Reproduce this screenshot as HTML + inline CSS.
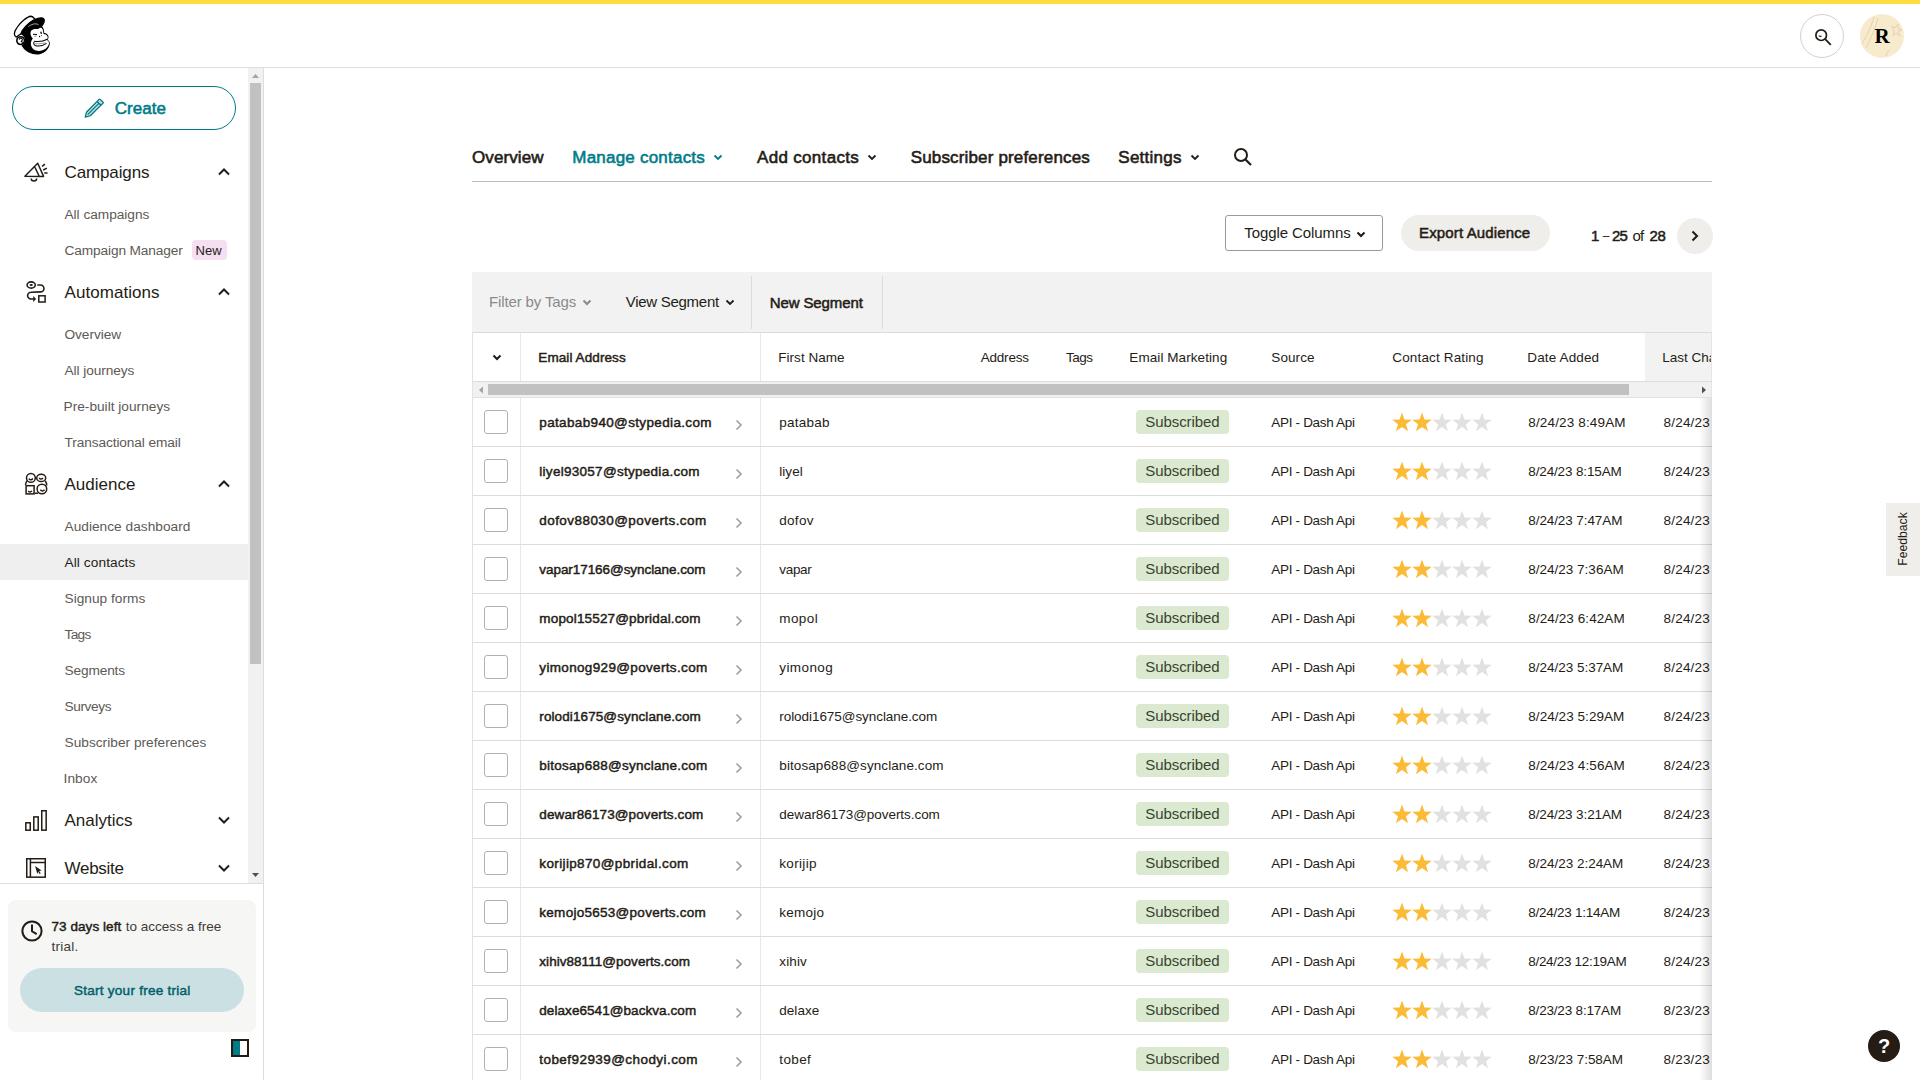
<!DOCTYPE html>
<html lang="en"><head><meta charset="utf-8"><title>Audience | Mailchimp</title>
<style>
*{box-sizing:border-box;margin:0;padding:0}
html,body{width:1920px;height:1080px;overflow:hidden;background:#fff}
body{font-family:"Liberation Sans",sans-serif;color:#241c15;position:relative}
.abs{position:absolute}
span,div,svg{position:absolute;white-space:nowrap}
#topbar{left:0;top:0;width:1920px;height:4px;background:#ffdd3f}
#hdr{left:0;top:4px;width:1920px;height:64px;border-bottom:1px solid #dfdedc;background:#fff}
#side{left:0;top:68px;width:264px;height:1012px;border-right:1px solid #dedddc;background:#fff}
#sscroll{left:0;top:0;width:263px;height:816px;border-bottom:1px solid #dedddc;overflow:hidden}
#sbtrack{left:248px;top:0;width:15px;height:815px;background:#f1f1f1}
#sbthumb{left:2px;top:15px;width:11px;height:581px;background:#c1c1c1}
#create{left:12px;top:18px;width:224px;height:44px;border:1px solid #007c89;border-radius:22px}
#create span{left:101px;top:12px;font-size:17px;font-weight:bold;color:#007c89;line-height:20px}
.nav{left:64px;font-size:17px;line-height:20px;color:#241c15}
.sn{left:64px;font-size:13.7px;line-height:16px;color:#5d5955}
.sn.act{color:#241c15}
#actbg{left:0;top:476px;width:248px;height:36px;background:#efefef}
.chev{left:217px;width:14px;height:9px}
.ico{left:24px;width:24px;height:24px}
#newb{left:192px;top:172px;width:35px;height:20px;border-radius:4px;background:#f7dff2;font-size:13px;line-height:20px;color:#241c15}
#newb span{top:1px;left:5px}
#trial{left:8px;top:832px;width:248px;height:132px;border-radius:8px;background:#f6f6f4}
#trial .tx{left:43px;font-size:13.5px;line-height:20px;color:#403b36}
#trial b{color:#241c15;position:static}
#tbtn{left:12px;top:68px;width:224px;height:44px;border-radius:22px;background:#cbe0e2;color:#00616b;font-weight:bold;font-size:13.5px;line-height:44px}
#tbtn span{top:1px;left:50px}
/* main */
.tab{top:146px;font-size:17px;line-height:22px;font-weight:bold;color:#241c15}
#tabline{left:472px;top:181px;width:1240px;height:1px;background:#bdbbb9}
#tog{left:1225px;top:215px;width:158px;height:36px;border:1px solid #9c9a97;border-radius:3px;background:#fff}
#tog span{left:18px;top:8px;font-size:15px;line-height:18px}
#exp{left:1401px;top:215px;width:149px;height:36px;border-radius:18px;background:#efeeea;font-size:15px;font-weight:bold;line-height:36px}
#exp span{top:0;left:19px}
.pg{left:1592px;top:226px;font-size:15px;line-height:20px}
#nx{left:1677px;top:218px;width:36px;height:36px;border-radius:18px;background:#efeeea}
#fbar{left:472px;top:272px;width:1240px;height:61px;background:#f2f2f2}
#fbar span{font-size:15px;line-height:18px;top:21px}
.vd{top:4px;width:1px;height:53px;background:#dddcda}
#thead{left:472px;top:332px;width:1240px;height:50px;overflow:hidden;background:#fff;border-left:1px solid #e3e2e0;border-right:1px solid #e6e5e4;border-top:1px solid #dcdbd9;border-bottom:1px solid #dddcda}
#thead span{top:16px;font-size:13.5px;line-height:16px;color:#241c15}
#hsb{left:472px;top:382px;width:1240px;height:16px;background:#f1f1f1;border-left:1px solid #e3e2e0;border-right:1px solid #e6e5e4;border-bottom:1px solid #e2e1e0}
#hsb .th{left:15px;top:2px;width:1141px;height:11px;background:#c1c1c1}
.row{left:472px;width:1240px;height:49px;border-left:1px solid #e3e2e0;border-bottom:1px solid #dddcda;background:#fff}
.row .t{top:16px;font-size:13.5px;line-height:16px;color:#241c15}
.cb{left:11px;top:12px;width:24px;height:24px;border:1px solid #b3b1af;border-radius:3px;background:#fff}
.em{left:66px;font-weight:bold}
.rc{left:261.500px;top:21px;width:8px;height:12px}
.fn{left:306px}
.sub{left:663px;top:12px;width:93px;height:24px;border-radius:4px;background:#dbe9d0;color:#37442e;font-size:15px;line-height:24px}
.sub span{top:0;left:10px}
.src{left:798px}
.stars{left:919px;top:14px;width:100px;height:20px}
.st{position:static;display:inline-block;width:20px;height:20px;vertical-align:top}
.da{left:1055px}
.lc{left:1190px}
.vl{width:1px;background:#e9e8e6}
#tshadow{left:1699px;top:398px;width:13px;height:682px;background:linear-gradient(to right,rgba(0,0,0,0),rgba(0,0,0,.13))}
#feedback{left:1886px;top:503px;width:34px;height:73px;background:#efeeea}
#feedback span{left:17px;top:36px;font-size:12.200px;line-height:16px;color:#241c15;transform:translate(-50%,-50%) rotate(-90deg)}
#help{left:1868px;top:1030px;width:32px;height:32px;border-radius:16px;background:#241c15;color:#fff;font-weight:bold;font-size:20px;line-height:32px;text-align:center}

.nav,.sn,.tab,.row .t,#thead span,#fbar span.sb,#trial .tx{margin-top:1px}

.sb{font-weight:normal !important;-webkit-text-stroke:0.034em currentColor}

</style></head>
<body>
<div id="topbar"></div>
<div id="hdr">
<svg id="logo" style="left:10px;top:8px;width:46px;height:46px" viewBox="0 0 1080 1080">
<path d="M150 590C90 560 80 480 160 370C250 240 400 110 490 100C530 100 560 140 585 165L560 185C430 260 290 400 250 520C210 540 180 560 150 590Z" fill="#fff" stroke="#000" stroke-width="30" stroke-linejoin="round"/>
<path d="M250 520C290 400 430 260 560 185L585 165C640 130 720 110 770 130C820 150 830 200 815 240C800 280 780 310 755 340C790 380 800 430 800 490C850 500 900 530 905 580C905 610 895 630 885 650C920 680 940 710 935 750C920 850 830 960 700 990C560 1020 380 960 300 830L270 790C330 760 360 700 350 640C340 580 300 540 250 520Z" fill="#000"/>
<circle cx="250" cy="672" r="90" fill="#fff" stroke="#000" stroke-width="38"/>
<path d="M215 650C225 612 275 602 290 642C298 670 270 680 265 695L300 715" fill="none" stroke="#000" stroke-width="26"/>
<path d="M480 500C480 440 520 405 580 400C620 400 650 405 690 380C720 360 760 375 770 420C780 450 780 490 790 515C840 520 885 550 885 590C885 615 875 635 865 650C900 680 920 700 915 740C900 830 800 915 680 915C580 915 500 860 490 760C485 720 500 670 535 625C500 590 480 540 480 500Z" fill="#fff"/>
<path d="M572 688C680 700 800 682 872 640" fill="none" stroke="#000" stroke-width="24"/>
<path d="M585 690C545 708 545 762 592 786C660 812 770 792 858 735" fill="none" stroke="#000" stroke-width="24"/>
<path d="M590 742C660 752 750 742 830 722" fill="none" stroke="#555" stroke-width="14"/>
<path d="M540 524L632 530" stroke="#000" stroke-width="24"/>
<path d="M572 574L622 556" stroke="#000" stroke-width="10"/>
<ellipse cx="730" cy="488" rx="17" ry="30" fill="#000" transform="rotate(-12 730 488)"/>
<circle cx="695" cy="575" r="15" fill="#000"/>
<ellipse cx="740" cy="555" rx="8" ry="13" fill="#000" transform="rotate(15 740 555)"/>
<path d="M430 345C500 290 590 255 672 298" fill="none" stroke="#fff" stroke-width="15"/>
</svg>
<div style="left:1800px;top:10px;width:44px;height:44px;border:1px solid #d3d1cd;border-radius:22px">
<svg style="left:13px;top:13px;width:18px;height:18px" viewBox="0 0 18 18"><circle cx="7.2" cy="7.2" r="5.3" fill="none" stroke="#241c15" stroke-width="1.7"/><path d="M11.2 11.2l5.6 5.6" stroke="#241c15" stroke-width="1.8"/><path d="M4.8 7.6c.8.7 1.8.8 2.6.5" stroke="#241c15" stroke-width="1.2" fill="none"/></svg>
</div>
<div style="left:1860px;top:10px;width:44px;height:44px;border-radius:22px;background:#f8ebcd;overflow:hidden">
<svg style="left:0;top:0;width:44px;height:44px" viewBox="0 0 44 44"><path d="M2 30C8 20 12 10 14 3M6 34C12 22 16 12 18 4M32 12l3 2 3-4 0 5 4 1-4 2 2 4-4-3-3 3 1-5zM26 42c1-3 2-5 4-6" fill="none" stroke="#d9c9a6" stroke-width=".7"/></svg>
<span style="left:0;top:8px;width:44px;text-align:center;font-family:'Liberation Serif',serif;font-weight:bold;font-size:21px;line-height:28px;color:#000">R</span>
</div>
</div>

<div id="side">
<div id="sscroll">
<div id="create">
<svg style="left:71px;top:10.700px;width:20.700px;height:20.700px" viewBox="0 0 22 22"><path d="M1.300 20.400L2.600 15.200L16 1.500Q16.500 1 17.100 1.500L20.300 4.500Q20.800 5 20.300 5.500L6.700 18.900Z" fill="#a9e4ea" stroke="#0a6e78" stroke-width="1.300" stroke-linejoin="round"/><path d="M3.900 17.600L15.500 6M13.900 3.700L18 7.700" fill="none" stroke="#0a6e78" stroke-width="1.200"/></svg>
<span class="sb" style="left:101.75px;letter-spacing:0.036px;">Create</span></div>

<svg class="ico" style="top:92px" viewBox="0 0 24 24"><path d="M0.900 16.200L13.700 3.300L19.600 16.400Z M10.900 7.200L15.100 16 M7.200 18.400c0 3.300 5.500 3.300 5.500 0 M18.100 6.300L20.900 4.100 M19.200 10L22.900 8.100 M20.300 13H23.500" fill="none" stroke="#241c15" stroke-width="1.500" stroke-linejoin="round"/></svg>
<span class="nav" style="left:64.50px;letter-spacing:-0.123px;top:94px">Campaigns</span>
<svg class="chev" style="top:99px" viewBox="0 0 14 9"><path d="M2 7.500l5-5 5 5" fill="none" stroke="#241c15" stroke-width="2"/></svg>
<span class="sn" style="left:64.50px;letter-spacing:-0.030px;top:138px">All campaigns</span>
<span class="sn" style="left:64.50px;letter-spacing:-0.127px;top:174px">Campaign Manager</span>
<div id="newb"><span style="left:3.50px;letter-spacing:0.066px;">New</span></div>

<svg class="ico" style="top:212px" viewBox="0 0 24 24"><ellipse cx="7.200" cy="5" rx="4.100" ry="3.100" fill="none" stroke="#241c15" stroke-width="1.600"/><ellipse cx="7.200" cy="5" rx="1.700" ry="0.900" fill="#241c15"/><path d="M13.300 5H16.500a3.450 3.450 0 0 1 0 6.900L7 12.300a3.350 3.350 0 0 0 0 6.700H9.500" fill="none" stroke="#241c15" stroke-width="1.600"/><path d="M9.200 16.100L12.100 19L9.200 22Z" fill="#241c15"/><rect x="14.800" y="15.800" width="6.300" height="6.200" fill="none" stroke="#241c15" stroke-width="1.500"/></svg>
<span class="nav" style="left:64.50px;letter-spacing:0.050px;top:214px">Automations</span>
<svg class="chev" style="top:219px" viewBox="0 0 14 9"><path d="M2 7.500l5-5 5 5" fill="none" stroke="#241c15" stroke-width="2"/></svg>
<span class="sn" style="left:64.50px;letter-spacing:-0.058px;top:258px">Overview</span>
<span class="sn" style="left:64.50px;letter-spacing:-0.082px;top:294px">All journeys</span>
<span class="sn" style="left:63.50px;letter-spacing:0.005px;top:330px">Pre-built journeys</span>
<span class="sn" style="left:64.50px;letter-spacing:-0.104px;top:366px">Transactional email</span>

<svg class="ico" style="top:404px" viewBox="0 0 24 24"><g fill="none" stroke="#241c15" stroke-width="1.500"><circle cx="6.900" cy="5.900" r="4.400"/><ellipse cx="17.200" cy="5.900" rx="4.500" ry="3.600"/><rect x="2.100" y="13.700" width="8" height="8.200"/><circle cx="17.900" cy="17" r="4.800"/><path d="M4.800 6.600Q6.800 9.100 8.900 6.600 M15.100 5.900Q17 8.100 18.900 5.900 M4.200 18.900Q6.100 21.100 7.900 18.900 M16.300 17.700Q18.300 20.100 20.500 17.700 M3.100 8.700Q1.600 10.500 1.500 13 M21.200 8.700Q22.600 10.500 22.700 13.500 M10.900 21.300H14"/></g></svg>
<span class="nav" style="left:64.50px;letter-spacing:0.009px;top:406px">Audience</span>
<svg class="chev" style="top:411px" viewBox="0 0 14 9"><path d="M2 7.500l5-5 5 5" fill="none" stroke="#241c15" stroke-width="2"/></svg>
<span class="sn" style="left:64.50px;letter-spacing:0.017px;top:450px">Audience dashboard</span>
<div id="actbg"></div>
<span class="sn act" style="left:64.50px;letter-spacing:0.078px;top:486px">All contacts</span>
<span class="sn" style="left:64.50px;letter-spacing:0.018px;top:522px">Signup forms</span>
<span class="sn" style="left:64.50px;letter-spacing:-0.689px;top:558px">Tags</span>
<span class="sn" style="left:64.50px;letter-spacing:-0.148px;top:594px">Segments</span>
<span class="sn" style="left:64.50px;letter-spacing:-0.392px;top:630px">Surveys</span>
<span class="sn" style="left:64.50px;letter-spacing:0.016px;top:666px">Subscriber preferences</span>
<span class="sn" style="left:63.50px;letter-spacing:0.090px;top:702px">Inbox</span>

<svg class="ico" style="top:740px" viewBox="0 0 24 24"><g fill="none" stroke="#241c15" stroke-width="1.500"><rect x="1.850" y="14.800" width="4.400" height="7.400"/><rect x="9.800" y="8.900" width="4.400" height="13.300"/><rect x="17.750" y="2.750" width="4.400" height="19.400"/></g></svg>
<span class="nav" style="left:64.50px;letter-spacing:-0.003px;top:742px">Analytics</span>
<svg class="chev" style="top:748px" viewBox="0 0 14 9"><path d="M2 1.500l5 5 5-5" fill="none" stroke="#241c15" stroke-width="2"/></svg>

<svg class="ico" style="top:788px" viewBox="0 0 24 24"><g fill="none" stroke="#241c15" stroke-width="1.500"><rect x="2.750" y="2.750" width="18.500" height="18.400"/><path d="M6.400 2.750V21.150 M6.400 6.600H21.250"/></g><path d="M11.100 10L17.600 14.400L15.100 15.100L16.800 17.500L15.600 18.100L14.200 15.800L13.300 17.900Z" fill="#241c15"/></svg>
<span class="nav" style="left:64.50px;letter-spacing:-0.275px;top:790px">Website</span>
<svg class="chev" style="top:796px" viewBox="0 0 14 9"><path d="M2 1.500l5 5 5-5" fill="none" stroke="#241c15" stroke-width="2"/></svg>

<div id="sbtrack"><div id="sbthumb"></div>
<svg style="left:4px;top:6px;width:7px;height:4px" viewBox="0 0 9 5"><path d="M0 5l4.500-5 4.500 5z" fill="#a3a3a3"/></svg>
<svg style="left:4px;top:805px;width:7px;height:4px" viewBox="0 0 9 5"><path d="M0 0l4.500 5 4.500-5z" fill="#505050"/></svg>
</div>
</div>
<div id="trial">
<svg style="left:13.200px;top:19.850px;width:22px;height:22px" viewBox="0 0 22 22"><circle cx="11" cy="11" r="9.600" fill="none" stroke="#241c15" stroke-width="2"/><path d="M11 4.500V11.300L15.700 14.200" fill="none" stroke="#241c15" stroke-width="2"/></svg>
<span class="tx sb" style="left:43.50px;letter-spacing:0.064px;top:16px;color:#241c15">73 days left</span><span class="tx" style="left:117.75px;letter-spacing:0.014px;top:16px">to access a free</span>
<span class="tx" style="left:43.50px;letter-spacing:0.249px;top:36px">trial.</span>
<div id="tbtn"><span class="sb" style="left:54.00px;letter-spacing:0.261px;">Start your free trial</span></div>
</div>
<div style="left:231px;top:971px;width:18px;height:18px;border:2px solid #241c15;background:#fff"><div style="left:0;top:0;width:7px;height:14px;background:#007c89"></div></div>
</div>

<span class="tab sb" style="left:472.00px;letter-spacing:0.104px;">Overview</span>
<span class="tab sb" style="left:572.30px;letter-spacing:0.217px;color:#007c89">Manage contacts</span>
<svg style="left:713px;top:154px;width:10px;height:7px" viewBox="0 0 10 7"><path d="M1.500 1.500l3.500 3.500 3.500-3.500" fill="none" stroke="#007c89" stroke-width="1.800"/></svg>
<span class="tab sb" style="left:757.00px;letter-spacing:0.320px;">Add contacts</span>
<svg style="left:867px;top:154px;width:10px;height:7px" viewBox="0 0 10 7"><path d="M1.500 1.500l3.500 3.500 3.500-3.500" fill="none" stroke="#241c15" stroke-width="1.800"/></svg>
<span class="tab sb" style="left:910.70px;letter-spacing:0.159px;">Subscriber preferences</span>
<span class="tab sb" style="left:1118.30px;letter-spacing:0.253px;">Settings</span>
<svg style="left:1190px;top:154px;width:10px;height:7px" viewBox="0 0 10 7"><path d="M1.500 1.500l3.500 3.500 3.500-3.500" fill="none" stroke="#241c15" stroke-width="1.800"/></svg>
<svg style="left:1233px;top:147px;width:20px;height:20px" viewBox="0 0 20 20"><circle cx="8" cy="8" r="6" fill="none" stroke="#241c15" stroke-width="2"/><path d="M12.500 12.500l5.500 5.500" stroke="#241c15" stroke-width="2.200"/></svg>
<div id="tabline"></div>

<div id="tog"><span style="left:18.30px;letter-spacing:-0.081px;">Toggle Columns</span>
<svg style="left:130px;top:15px;width:10px;height:7px" viewBox="0 0 10 7"><path d="M1.500 1.500l3.500 3.500 3.500-3.500" fill="none" stroke="#241c15" stroke-width="2.100"/></svg></div>
<div id="exp"><span class="sb" style="left:18.00px;letter-spacing:0.141px;">Export Audience</span></div>
<span class="pg sb" style="left:1591.00px;letter-spacing:0.000px;">1</span><span class="pg" style="left:1602.70px;letter-spacing:0.000px;font-size:12px">–</span><span class="pg sb" style="left:1612.00px;letter-spacing:-0.842px;">25</span><span class="pg" style="left:1632.50px;letter-spacing:-0.842px;">of</span><span class="pg sb" style="left:1649.60px;letter-spacing:-0.542px;">28</span>
<div id="nx"><svg style="left:14px;top:12px;width:8px;height:12px" viewBox="0 0 8 12"><path d="M1.500 1.500L6 6l-4.500 4.500" fill="none" stroke="#241c15" stroke-width="2.100"/></svg></div>

<div id="fbar">
<span style="left:17.00px;letter-spacing:-0.130px;color:#8c8a87">Filter by Tags</span>
<svg style="left:109.500px;top:27px;width:10px;height:7px" viewBox="0 0 10 7"><path d="M1.500 1.500l3.500 3.500 3.500-3.500" fill="none" stroke="#8c8a87" stroke-width="2"/></svg>
<span style="left:153.70px;letter-spacing:-0.271px;">View Segment</span>
<svg style="left:253px;top:27px;width:10px;height:7px" viewBox="0 0 10 7"><path d="M1.500 1.500l3.500 3.500 3.500-3.500" fill="none" stroke="#241c15" stroke-width="1.800"/></svg>
<div class="vd" style="left:279px"></div>
<span class="sb" style="left:297.70px;letter-spacing:-0.104px;">New Segment</span>
<div class="vd" style="left:410px"></div>
</div>

<div id="thead">
<svg style="left:19px;top:21px;width:10px;height:7px" viewBox="0 0 10 7"><path d="M1.500 1.500l3.500 3.500 3.500-3.500" fill="none" stroke="#241c15" stroke-width="2"/></svg>
<div class="vl" style="left:47px;top:0;height:48px"></div>
<span class="sb" style="left:65.30px;letter-spacing:0.093px;">Email Address</span>
<div class="vl" style="left:287px;top:0;height:48px"></div>
<span style="left:305.30px;letter-spacing:0.023px;">First Name</span>
<span style="left:507.70px;letter-spacing:-0.196px;">Address</span>
<span style="left:593.00px;letter-spacing:-0.489px;">Tags</span>
<span style="left:656.30px;letter-spacing:0.081px;">Email Marketing</span>
<span style="left:798.30px;letter-spacing:0.087px;">Source</span>
<span style="left:919.30px;letter-spacing:0.147px;">Contact Rating</span>
<span style="left:1054.30px;letter-spacing:0.134px;">Date Added</span>
<div style="left:1172px;top:0;width:67px;height:48px;background:#f2f2f2"></div>
<span style="left:1189.30px;letter-spacing:0.000px;">Last Cha</span>
</div>
<div id="hsb"><div class="th"></div>
<svg style="left:6px;top:4px;width:4px;height:8px" viewBox="0 0 5 9"><path d="M5 0L0 4.500 5 9z" fill="#a3a3a3"/></svg>
<svg style="left:1229px;top:4px;width:4px;height:8px" viewBox="0 0 5 9"><path d="M0 0l5 4.500L0 9z" fill="#505050"/></svg>
</div>

<div id="rows">
<div class="row" style="top:398px">
<span class="cb"></span><span class="vl" style="left:47px;top:0;height:48px"></span><span class="vl" style="left:287px;top:0;height:48px"></span>
<span class="em t sb" style="left:66.30px;letter-spacing:0.349px;">patabab940@stypedia.com</span>
<svg class="rc" viewBox="0 0 8 12"><path d="M1.5 1.5L6 6l-4.5 4.5" fill="none" stroke="#a3a19f" stroke-width="1.700"/></svg>
<span class="fn t" style="left:306.30px;letter-spacing:0.235px;">patabab</span>
<span class="sub"><span style="left:9.30px;letter-spacing:-0.078px;">Subscribed</span></span>
<span class="src t" style="left:798.30px;letter-spacing:-0.318px;">API - Dash Api</span>
<span class="stars"><svg class="st" viewBox="0 0 20 20"><path fill="#fbbb36" d="M10.00 0.60L12.44 7.54L19.80 7.72L13.95 12.18L16.05 19.23L10.00 15.05L3.95 19.23L6.05 12.18L0.20 7.72L7.56 7.54Z"/></svg><svg class="st" viewBox="0 0 20 20"><path fill="#fbbb36" d="M10.00 0.60L12.44 7.54L19.80 7.72L13.95 12.18L16.05 19.23L10.00 15.05L3.95 19.23L6.05 12.18L0.20 7.72L7.56 7.54Z"/></svg><svg class="st" viewBox="0 0 20 20"><path fill="#e2e1e0" d="M10.00 0.60L12.44 7.54L19.80 7.72L13.95 12.18L16.05 19.23L10.00 15.05L3.95 19.23L6.05 12.18L0.20 7.72L7.56 7.54Z"/></svg><svg class="st" viewBox="0 0 20 20"><path fill="#e2e1e0" d="M10.00 0.60L12.44 7.54L19.80 7.72L13.95 12.18L16.05 19.23L10.00 15.05L3.95 19.23L6.05 12.18L0.20 7.72L7.56 7.54Z"/></svg><svg class="st" viewBox="0 0 20 20"><path fill="#e2e1e0" d="M10.00 0.60L12.44 7.54L19.80 7.72L13.95 12.18L16.05 19.23L10.00 15.05L3.95 19.23L6.05 12.18L0.20 7.72L7.56 7.54Z"/></svg></span>
<span class="da t" style="left:1055.30px;letter-spacing:0.148px;">8/24/23 8:49AM</span>
<span class="lc t" style="left:1190.50px;letter-spacing:0.211px;">8/24/23</span>
</div><div class="row" style="top:447px">
<span class="cb"></span><span class="vl" style="left:47px;top:0;height:48px"></span><span class="vl" style="left:287px;top:0;height:48px"></span>
<span class="em t sb" style="left:66.30px;letter-spacing:0.282px;">liyel93057@stypedia.com</span>
<svg class="rc" viewBox="0 0 8 12"><path d="M1.5 1.5L6 6l-4.5 4.5" fill="none" stroke="#a3a19f" stroke-width="1.700"/></svg>
<span class="fn t" style="left:306.30px;letter-spacing:0.036px;">liyel</span>
<span class="sub"><span style="left:9.30px;letter-spacing:-0.078px;">Subscribed</span></span>
<span class="src t" style="left:798.30px;letter-spacing:-0.318px;">API - Dash Api</span>
<span class="stars"><svg class="st" viewBox="0 0 20 20"><path fill="#fbbb36" d="M10.00 0.60L12.44 7.54L19.80 7.72L13.95 12.18L16.05 19.23L10.00 15.05L3.95 19.23L6.05 12.18L0.20 7.72L7.56 7.54Z"/></svg><svg class="st" viewBox="0 0 20 20"><path fill="#fbbb36" d="M10.00 0.60L12.44 7.54L19.80 7.72L13.95 12.18L16.05 19.23L10.00 15.05L3.95 19.23L6.05 12.18L0.20 7.72L7.56 7.54Z"/></svg><svg class="st" viewBox="0 0 20 20"><path fill="#e2e1e0" d="M10.00 0.60L12.44 7.54L19.80 7.72L13.95 12.18L16.05 19.23L10.00 15.05L3.95 19.23L6.05 12.18L0.20 7.72L7.56 7.54Z"/></svg><svg class="st" viewBox="0 0 20 20"><path fill="#e2e1e0" d="M10.00 0.60L12.44 7.54L19.80 7.72L13.95 12.18L16.05 19.23L10.00 15.05L3.95 19.23L6.05 12.18L0.20 7.72L7.56 7.54Z"/></svg><svg class="st" viewBox="0 0 20 20"><path fill="#e2e1e0" d="M10.00 0.60L12.44 7.54L19.80 7.72L13.95 12.18L16.05 19.23L10.00 15.05L3.95 19.23L6.05 12.18L0.20 7.72L7.56 7.54Z"/></svg></span>
<span class="da t" style="left:1055.30px;letter-spacing:-0.144px;">8/24/23 8:15AM</span>
<span class="lc t" style="left:1190.50px;letter-spacing:0.211px;">8/24/23</span>
</div><div class="row" style="top:496px">
<span class="cb"></span><span class="vl" style="left:47px;top:0;height:48px"></span><span class="vl" style="left:287px;top:0;height:48px"></span>
<span class="em t sb" style="left:66.30px;letter-spacing:0.436px;">dofov88030@poverts.com</span>
<svg class="rc" viewBox="0 0 8 12"><path d="M1.5 1.5L6 6l-4.5 4.5" fill="none" stroke="#a3a19f" stroke-width="1.700"/></svg>
<span class="fn t" style="left:306.30px;letter-spacing:0.281px;">dofov</span>
<span class="sub"><span style="left:9.30px;letter-spacing:-0.078px;">Subscribed</span></span>
<span class="src t" style="left:798.30px;letter-spacing:-0.318px;">API - Dash Api</span>
<span class="stars"><svg class="st" viewBox="0 0 20 20"><path fill="#fbbb36" d="M10.00 0.60L12.44 7.54L19.80 7.72L13.95 12.18L16.05 19.23L10.00 15.05L3.95 19.23L6.05 12.18L0.20 7.72L7.56 7.54Z"/></svg><svg class="st" viewBox="0 0 20 20"><path fill="#fbbb36" d="M10.00 0.60L12.44 7.54L19.80 7.72L13.95 12.18L16.05 19.23L10.00 15.05L3.95 19.23L6.05 12.18L0.20 7.72L7.56 7.54Z"/></svg><svg class="st" viewBox="0 0 20 20"><path fill="#e2e1e0" d="M10.00 0.60L12.44 7.54L19.80 7.72L13.95 12.18L16.05 19.23L10.00 15.05L3.95 19.23L6.05 12.18L0.20 7.72L7.56 7.54Z"/></svg><svg class="st" viewBox="0 0 20 20"><path fill="#e2e1e0" d="M10.00 0.60L12.44 7.54L19.80 7.72L13.95 12.18L16.05 19.23L10.00 15.05L3.95 19.23L6.05 12.18L0.20 7.72L7.56 7.54Z"/></svg><svg class="st" viewBox="0 0 20 20"><path fill="#e2e1e0" d="M10.00 0.60L12.44 7.54L19.80 7.72L13.95 12.18L16.05 19.23L10.00 15.05L3.95 19.23L6.05 12.18L0.20 7.72L7.56 7.54Z"/></svg></span>
<span class="da t" style="left:1055.30px;letter-spacing:-0.090px;">8/24/23 7:47AM</span>
<span class="lc t" style="left:1190.50px;letter-spacing:0.211px;">8/24/23</span>
</div><div class="row" style="top:545px">
<span class="cb"></span><span class="vl" style="left:47px;top:0;height:48px"></span><span class="vl" style="left:287px;top:0;height:48px"></span>
<span class="em t sb" style="left:66.30px;letter-spacing:-0.059px;">vapar17166@synclane.com</span>
<svg class="rc" viewBox="0 0 8 12"><path d="M1.5 1.5L6 6l-4.5 4.5" fill="none" stroke="#a3a19f" stroke-width="1.700"/></svg>
<span class="fn t" style="left:306.30px;letter-spacing:-0.319px;">vapar</span>
<span class="sub"><span style="left:9.30px;letter-spacing:-0.078px;">Subscribed</span></span>
<span class="src t" style="left:798.30px;letter-spacing:-0.318px;">API - Dash Api</span>
<span class="stars"><svg class="st" viewBox="0 0 20 20"><path fill="#fbbb36" d="M10.00 0.60L12.44 7.54L19.80 7.72L13.95 12.18L16.05 19.23L10.00 15.05L3.95 19.23L6.05 12.18L0.20 7.72L7.56 7.54Z"/></svg><svg class="st" viewBox="0 0 20 20"><path fill="#fbbb36" d="M10.00 0.60L12.44 7.54L19.80 7.72L13.95 12.18L16.05 19.23L10.00 15.05L3.95 19.23L6.05 12.18L0.20 7.72L7.56 7.54Z"/></svg><svg class="st" viewBox="0 0 20 20"><path fill="#e2e1e0" d="M10.00 0.60L12.44 7.54L19.80 7.72L13.95 12.18L16.05 19.23L10.00 15.05L3.95 19.23L6.05 12.18L0.20 7.72L7.56 7.54Z"/></svg><svg class="st" viewBox="0 0 20 20"><path fill="#e2e1e0" d="M10.00 0.60L12.44 7.54L19.80 7.72L13.95 12.18L16.05 19.23L10.00 15.05L3.95 19.23L6.05 12.18L0.20 7.72L7.56 7.54Z"/></svg><svg class="st" viewBox="0 0 20 20"><path fill="#e2e1e0" d="M10.00 0.60L12.44 7.54L19.80 7.72L13.95 12.18L16.05 19.23L10.00 15.05L3.95 19.23L6.05 12.18L0.20 7.72L7.56 7.54Z"/></svg></span>
<span class="da t" style="left:1055.30px;letter-spacing:0.002px;">8/24/23 7:36AM</span>
<span class="lc t" style="left:1190.50px;letter-spacing:0.211px;">8/24/23</span>
</div><div class="row" style="top:594px">
<span class="cb"></span><span class="vl" style="left:47px;top:0;height:48px"></span><span class="vl" style="left:287px;top:0;height:48px"></span>
<span class="em t sb" style="left:66.30px;letter-spacing:0.164px;">mopol15527@pbridal.com</span>
<svg class="rc" viewBox="0 0 8 12"><path d="M1.5 1.5L6 6l-4.5 4.5" fill="none" stroke="#a3a19f" stroke-width="1.700"/></svg>
<span class="fn t" style="left:306.30px;letter-spacing:0.408px;">mopol</span>
<span class="sub"><span style="left:9.30px;letter-spacing:-0.078px;">Subscribed</span></span>
<span class="src t" style="left:798.30px;letter-spacing:-0.318px;">API - Dash Api</span>
<span class="stars"><svg class="st" viewBox="0 0 20 20"><path fill="#fbbb36" d="M10.00 0.60L12.44 7.54L19.80 7.72L13.95 12.18L16.05 19.23L10.00 15.05L3.95 19.23L6.05 12.18L0.20 7.72L7.56 7.54Z"/></svg><svg class="st" viewBox="0 0 20 20"><path fill="#fbbb36" d="M10.00 0.60L12.44 7.54L19.80 7.72L13.95 12.18L16.05 19.23L10.00 15.05L3.95 19.23L6.05 12.18L0.20 7.72L7.56 7.54Z"/></svg><svg class="st" viewBox="0 0 20 20"><path fill="#e2e1e0" d="M10.00 0.60L12.44 7.54L19.80 7.72L13.95 12.18L16.05 19.23L10.00 15.05L3.95 19.23L6.05 12.18L0.20 7.72L7.56 7.54Z"/></svg><svg class="st" viewBox="0 0 20 20"><path fill="#e2e1e0" d="M10.00 0.60L12.44 7.54L19.80 7.72L13.95 12.18L16.05 19.23L10.00 15.05L3.95 19.23L6.05 12.18L0.20 7.72L7.56 7.54Z"/></svg><svg class="st" viewBox="0 0 20 20"><path fill="#e2e1e0" d="M10.00 0.60L12.44 7.54L19.80 7.72L13.95 12.18L16.05 19.23L10.00 15.05L3.95 19.23L6.05 12.18L0.20 7.72L7.56 7.54Z"/></svg></span>
<span class="da t" style="left:1055.30px;letter-spacing:0.079px;">8/24/23 6:42AM</span>
<span class="lc t" style="left:1190.50px;letter-spacing:0.211px;">8/24/23</span>
</div><div class="row" style="top:643px">
<span class="cb"></span><span class="vl" style="left:47px;top:0;height:48px"></span><span class="vl" style="left:287px;top:0;height:48px"></span>
<span class="em t sb" style="left:66.30px;letter-spacing:0.341px;">yimonog929@poverts.com</span>
<svg class="rc" viewBox="0 0 8 12"><path d="M1.5 1.5L6 6l-4.5 4.5" fill="none" stroke="#a3a19f" stroke-width="1.700"/></svg>
<span class="fn t" style="left:306.30px;letter-spacing:0.413px;">yimonog</span>
<span class="sub"><span style="left:9.30px;letter-spacing:-0.078px;">Subscribed</span></span>
<span class="src t" style="left:798.30px;letter-spacing:-0.318px;">API - Dash Api</span>
<span class="stars"><svg class="st" viewBox="0 0 20 20"><path fill="#fbbb36" d="M10.00 0.60L12.44 7.54L19.80 7.72L13.95 12.18L16.05 19.23L10.00 15.05L3.95 19.23L6.05 12.18L0.20 7.72L7.56 7.54Z"/></svg><svg class="st" viewBox="0 0 20 20"><path fill="#fbbb36" d="M10.00 0.60L12.44 7.54L19.80 7.72L13.95 12.18L16.05 19.23L10.00 15.05L3.95 19.23L6.05 12.18L0.20 7.72L7.56 7.54Z"/></svg><svg class="st" viewBox="0 0 20 20"><path fill="#e2e1e0" d="M10.00 0.60L12.44 7.54L19.80 7.72L13.95 12.18L16.05 19.23L10.00 15.05L3.95 19.23L6.05 12.18L0.20 7.72L7.56 7.54Z"/></svg><svg class="st" viewBox="0 0 20 20"><path fill="#e2e1e0" d="M10.00 0.60L12.44 7.54L19.80 7.72L13.95 12.18L16.05 19.23L10.00 15.05L3.95 19.23L6.05 12.18L0.20 7.72L7.56 7.54Z"/></svg><svg class="st" viewBox="0 0 20 20"><path fill="#e2e1e0" d="M10.00 0.60L12.44 7.54L19.80 7.72L13.95 12.18L16.05 19.23L10.00 15.05L3.95 19.23L6.05 12.18L0.20 7.72L7.56 7.54Z"/></svg></span>
<span class="da t" style="left:1055.30px;letter-spacing:-0.021px;">8/24/23 5:37AM</span>
<span class="lc t" style="left:1190.50px;letter-spacing:0.211px;">8/24/23</span>
</div><div class="row" style="top:692px">
<span class="cb"></span><span class="vl" style="left:47px;top:0;height:48px"></span><span class="vl" style="left:287px;top:0;height:48px"></span>
<span class="em t sb" style="left:66.30px;letter-spacing:0.102px;">rolodi1675@synclane.com</span>
<svg class="rc" viewBox="0 0 8 12"><path d="M1.5 1.5L6 6l-4.5 4.5" fill="none" stroke="#a3a19f" stroke-width="1.700"/></svg>
<span class="fn t" style="left:306.30px;letter-spacing:-0.061px;">rolodi1675@synclane.com</span>
<span class="sub"><span style="left:9.30px;letter-spacing:-0.078px;">Subscribed</span></span>
<span class="src t" style="left:798.30px;letter-spacing:-0.318px;">API - Dash Api</span>
<span class="stars"><svg class="st" viewBox="0 0 20 20"><path fill="#fbbb36" d="M10.00 0.60L12.44 7.54L19.80 7.72L13.95 12.18L16.05 19.23L10.00 15.05L3.95 19.23L6.05 12.18L0.20 7.72L7.56 7.54Z"/></svg><svg class="st" viewBox="0 0 20 20"><path fill="#fbbb36" d="M10.00 0.60L12.44 7.54L19.80 7.72L13.95 12.18L16.05 19.23L10.00 15.05L3.95 19.23L6.05 12.18L0.20 7.72L7.56 7.54Z"/></svg><svg class="st" viewBox="0 0 20 20"><path fill="#e2e1e0" d="M10.00 0.60L12.44 7.54L19.80 7.72L13.95 12.18L16.05 19.23L10.00 15.05L3.95 19.23L6.05 12.18L0.20 7.72L7.56 7.54Z"/></svg><svg class="st" viewBox="0 0 20 20"><path fill="#e2e1e0" d="M10.00 0.60L12.44 7.54L19.80 7.72L13.95 12.18L16.05 19.23L10.00 15.05L3.95 19.23L6.05 12.18L0.20 7.72L7.56 7.54Z"/></svg><svg class="st" viewBox="0 0 20 20"><path fill="#e2e1e0" d="M10.00 0.60L12.44 7.54L19.80 7.72L13.95 12.18L16.05 19.23L10.00 15.05L3.95 19.23L6.05 12.18L0.20 7.72L7.56 7.54Z"/></svg></span>
<span class="da t" style="left:1055.30px;letter-spacing:0.056px;">8/24/23 5:29AM</span>
<span class="lc t" style="left:1190.50px;letter-spacing:0.211px;">8/24/23</span>
</div><div class="row" style="top:741px">
<span class="cb"></span><span class="vl" style="left:47px;top:0;height:48px"></span><span class="vl" style="left:287px;top:0;height:48px"></span>
<span class="em t sb" style="left:66.30px;letter-spacing:0.257px;">bitosap688@synclane.com</span>
<svg class="rc" viewBox="0 0 8 12"><path d="M1.5 1.5L6 6l-4.5 4.5" fill="none" stroke="#a3a19f" stroke-width="1.700"/></svg>
<span class="fn t" style="left:306.30px;letter-spacing:0.089px;">bitosap688@synclane.com</span>
<span class="sub"><span style="left:9.30px;letter-spacing:-0.078px;">Subscribed</span></span>
<span class="src t" style="left:798.30px;letter-spacing:-0.318px;">API - Dash Api</span>
<span class="stars"><svg class="st" viewBox="0 0 20 20"><path fill="#fbbb36" d="M10.00 0.60L12.44 7.54L19.80 7.72L13.95 12.18L16.05 19.23L10.00 15.05L3.95 19.23L6.05 12.18L0.20 7.72L7.56 7.54Z"/></svg><svg class="st" viewBox="0 0 20 20"><path fill="#fbbb36" d="M10.00 0.60L12.44 7.54L19.80 7.72L13.95 12.18L16.05 19.23L10.00 15.05L3.95 19.23L6.05 12.18L0.20 7.72L7.56 7.54Z"/></svg><svg class="st" viewBox="0 0 20 20"><path fill="#e2e1e0" d="M10.00 0.60L12.44 7.54L19.80 7.72L13.95 12.18L16.05 19.23L10.00 15.05L3.95 19.23L6.05 12.18L0.20 7.72L7.56 7.54Z"/></svg><svg class="st" viewBox="0 0 20 20"><path fill="#e2e1e0" d="M10.00 0.60L12.44 7.54L19.80 7.72L13.95 12.18L16.05 19.23L10.00 15.05L3.95 19.23L6.05 12.18L0.20 7.72L7.56 7.54Z"/></svg><svg class="st" viewBox="0 0 20 20"><path fill="#e2e1e0" d="M10.00 0.60L12.44 7.54L19.80 7.72L13.95 12.18L16.05 19.23L10.00 15.05L3.95 19.23L6.05 12.18L0.20 7.72L7.56 7.54Z"/></svg></span>
<span class="da t" style="left:1055.30px;letter-spacing:0.094px;">8/24/23 4:56AM</span>
<span class="lc t" style="left:1190.50px;letter-spacing:0.211px;">8/24/23</span>
</div><div class="row" style="top:790px">
<span class="cb"></span><span class="vl" style="left:47px;top:0;height:48px"></span><span class="vl" style="left:287px;top:0;height:48px"></span>
<span class="em t sb" style="left:66.30px;letter-spacing:0.115px;">dewar86173@poverts.com</span>
<svg class="rc" viewBox="0 0 8 12"><path d="M1.5 1.5L6 6l-4.5 4.5" fill="none" stroke="#a3a19f" stroke-width="1.700"/></svg>
<span class="fn t" style="left:306.30px;letter-spacing:-0.047px;">dewar86173@poverts.com</span>
<span class="sub"><span style="left:9.30px;letter-spacing:-0.078px;">Subscribed</span></span>
<span class="src t" style="left:798.30px;letter-spacing:-0.318px;">API - Dash Api</span>
<span class="stars"><svg class="st" viewBox="0 0 20 20"><path fill="#fbbb36" d="M10.00 0.60L12.44 7.54L19.80 7.72L13.95 12.18L16.05 19.23L10.00 15.05L3.95 19.23L6.05 12.18L0.20 7.72L7.56 7.54Z"/></svg><svg class="st" viewBox="0 0 20 20"><path fill="#fbbb36" d="M10.00 0.60L12.44 7.54L19.80 7.72L13.95 12.18L16.05 19.23L10.00 15.05L3.95 19.23L6.05 12.18L0.20 7.72L7.56 7.54Z"/></svg><svg class="st" viewBox="0 0 20 20"><path fill="#e2e1e0" d="M10.00 0.60L12.44 7.54L19.80 7.72L13.95 12.18L16.05 19.23L10.00 15.05L3.95 19.23L6.05 12.18L0.20 7.72L7.56 7.54Z"/></svg><svg class="st" viewBox="0 0 20 20"><path fill="#e2e1e0" d="M10.00 0.60L12.44 7.54L19.80 7.72L13.95 12.18L16.05 19.23L10.00 15.05L3.95 19.23L6.05 12.18L0.20 7.72L7.56 7.54Z"/></svg><svg class="st" viewBox="0 0 20 20"><path fill="#e2e1e0" d="M10.00 0.60L12.44 7.54L19.80 7.72L13.95 12.18L16.05 19.23L10.00 15.05L3.95 19.23L6.05 12.18L0.20 7.72L7.56 7.54Z"/></svg></span>
<span class="da t" style="left:1055.30px;letter-spacing:-0.121px;">8/24/23 3:21AM</span>
<span class="lc t" style="left:1190.50px;letter-spacing:0.211px;">8/24/23</span>
</div><div class="row" style="top:839px">
<span class="cb"></span><span class="vl" style="left:47px;top:0;height:48px"></span><span class="vl" style="left:287px;top:0;height:48px"></span>
<span class="em t sb" style="left:66.30px;letter-spacing:0.366px;">korijip870@pbridal.com</span>
<svg class="rc" viewBox="0 0 8 12"><path d="M1.5 1.5L6 6l-4.5 4.5" fill="none" stroke="#a3a19f" stroke-width="1.700"/></svg>
<span class="fn t" style="left:306.30px;letter-spacing:0.325px;">korijip</span>
<span class="sub"><span style="left:9.30px;letter-spacing:-0.078px;">Subscribed</span></span>
<span class="src t" style="left:798.30px;letter-spacing:-0.318px;">API - Dash Api</span>
<span class="stars"><svg class="st" viewBox="0 0 20 20"><path fill="#fbbb36" d="M10.00 0.60L12.44 7.54L19.80 7.72L13.95 12.18L16.05 19.23L10.00 15.05L3.95 19.23L6.05 12.18L0.20 7.72L7.56 7.54Z"/></svg><svg class="st" viewBox="0 0 20 20"><path fill="#fbbb36" d="M10.00 0.60L12.44 7.54L19.80 7.72L13.95 12.18L16.05 19.23L10.00 15.05L3.95 19.23L6.05 12.18L0.20 7.72L7.56 7.54Z"/></svg><svg class="st" viewBox="0 0 20 20"><path fill="#e2e1e0" d="M10.00 0.60L12.44 7.54L19.80 7.72L13.95 12.18L16.05 19.23L10.00 15.05L3.95 19.23L6.05 12.18L0.20 7.72L7.56 7.54Z"/></svg><svg class="st" viewBox="0 0 20 20"><path fill="#e2e1e0" d="M10.00 0.60L12.44 7.54L19.80 7.72L13.95 12.18L16.05 19.23L10.00 15.05L3.95 19.23L6.05 12.18L0.20 7.72L7.56 7.54Z"/></svg><svg class="st" viewBox="0 0 20 20"><path fill="#e2e1e0" d="M10.00 0.60L12.44 7.54L19.80 7.72L13.95 12.18L16.05 19.23L10.00 15.05L3.95 19.23L6.05 12.18L0.20 7.72L7.56 7.54Z"/></svg></span>
<span class="da t" style="left:1055.30px;letter-spacing:-0.021px;">8/24/23 2:24AM</span>
<span class="lc t" style="left:1190.50px;letter-spacing:0.211px;">8/24/23</span>
</div><div class="row" style="top:888px">
<span class="cb"></span><span class="vl" style="left:47px;top:0;height:48px"></span><span class="vl" style="left:287px;top:0;height:48px"></span>
<span class="em t sb" style="left:66.30px;letter-spacing:0.275px;">kemojo5653@poverts.com</span>
<svg class="rc" viewBox="0 0 8 12"><path d="M1.5 1.5L6 6l-4.5 4.5" fill="none" stroke="#a3a19f" stroke-width="1.700"/></svg>
<span class="fn t" style="left:306.30px;letter-spacing:0.218px;">kemojo</span>
<span class="sub"><span style="left:9.30px;letter-spacing:-0.078px;">Subscribed</span></span>
<span class="src t" style="left:798.30px;letter-spacing:-0.318px;">API - Dash Api</span>
<span class="stars"><svg class="st" viewBox="0 0 20 20"><path fill="#fbbb36" d="M10.00 0.60L12.44 7.54L19.80 7.72L13.95 12.18L16.05 19.23L10.00 15.05L3.95 19.23L6.05 12.18L0.20 7.72L7.56 7.54Z"/></svg><svg class="st" viewBox="0 0 20 20"><path fill="#fbbb36" d="M10.00 0.60L12.44 7.54L19.80 7.72L13.95 12.18L16.05 19.23L10.00 15.05L3.95 19.23L6.05 12.18L0.20 7.72L7.56 7.54Z"/></svg><svg class="st" viewBox="0 0 20 20"><path fill="#e2e1e0" d="M10.00 0.60L12.44 7.54L19.80 7.72L13.95 12.18L16.05 19.23L10.00 15.05L3.95 19.23L6.05 12.18L0.20 7.72L7.56 7.54Z"/></svg><svg class="st" viewBox="0 0 20 20"><path fill="#e2e1e0" d="M10.00 0.60L12.44 7.54L19.80 7.72L13.95 12.18L16.05 19.23L10.00 15.05L3.95 19.23L6.05 12.18L0.20 7.72L7.56 7.54Z"/></svg><svg class="st" viewBox="0 0 20 20"><path fill="#e2e1e0" d="M10.00 0.60L12.44 7.54L19.80 7.72L13.95 12.18L16.05 19.23L10.00 15.05L3.95 19.23L6.05 12.18L0.20 7.72L7.56 7.54Z"/></svg></span>
<span class="da t" style="left:1055.30px;letter-spacing:-0.267px;">8/24/23 1:14AM</span>
<span class="lc t" style="left:1190.50px;letter-spacing:0.211px;">8/24/23</span>
</div><div class="row" style="top:937px">
<span class="cb"></span><span class="vl" style="left:47px;top:0;height:48px"></span><span class="vl" style="left:287px;top:0;height:48px"></span>
<span class="em t sb" style="left:66.30px;letter-spacing:0.042px;">xihiv88111@poverts.com</span>
<svg class="rc" viewBox="0 0 8 12"><path d="M1.5 1.5L6 6l-4.5 4.5" fill="none" stroke="#a3a19f" stroke-width="1.700"/></svg>
<span class="fn t" style="left:306.30px;letter-spacing:0.111px;">xihiv</span>
<span class="sub"><span style="left:9.30px;letter-spacing:-0.078px;">Subscribed</span></span>
<span class="src t" style="left:798.30px;letter-spacing:-0.318px;">API - Dash Api</span>
<span class="stars"><svg class="st" viewBox="0 0 20 20"><path fill="#fbbb36" d="M10.00 0.60L12.44 7.54L19.80 7.72L13.95 12.18L16.05 19.23L10.00 15.05L3.95 19.23L6.05 12.18L0.20 7.72L7.56 7.54Z"/></svg><svg class="st" viewBox="0 0 20 20"><path fill="#fbbb36" d="M10.00 0.60L12.44 7.54L19.80 7.72L13.95 12.18L16.05 19.23L10.00 15.05L3.95 19.23L6.05 12.18L0.20 7.72L7.56 7.54Z"/></svg><svg class="st" viewBox="0 0 20 20"><path fill="#e2e1e0" d="M10.00 0.60L12.44 7.54L19.80 7.72L13.95 12.18L16.05 19.23L10.00 15.05L3.95 19.23L6.05 12.18L0.20 7.72L7.56 7.54Z"/></svg><svg class="st" viewBox="0 0 20 20"><path fill="#e2e1e0" d="M10.00 0.60L12.44 7.54L19.80 7.72L13.95 12.18L16.05 19.23L10.00 15.05L3.95 19.23L6.05 12.18L0.20 7.72L7.56 7.54Z"/></svg><svg class="st" viewBox="0 0 20 20"><path fill="#e2e1e0" d="M10.00 0.60L12.44 7.54L19.80 7.72L13.95 12.18L16.05 19.23L10.00 15.05L3.95 19.23L6.05 12.18L0.20 7.72L7.56 7.54Z"/></svg></span>
<span class="da t" style="left:1055.30px;letter-spacing:-0.313px;">8/24/23 12:19AM</span>
<span class="lc t" style="left:1190.50px;letter-spacing:0.211px;">8/24/23</span>
</div><div class="row" style="top:986px">
<span class="cb"></span><span class="vl" style="left:47px;top:0;height:48px"></span><span class="vl" style="left:287px;top:0;height:48px"></span>
<span class="em t sb" style="left:66.30px;letter-spacing:0.065px;">delaxe6541@backva.com</span>
<svg class="rc" viewBox="0 0 8 12"><path d="M1.5 1.5L6 6l-4.5 4.5" fill="none" stroke="#a3a19f" stroke-width="1.700"/></svg>
<span class="fn t" style="left:306.30px;letter-spacing:0.025px;">delaxe</span>
<span class="sub"><span style="left:9.30px;letter-spacing:-0.078px;">Subscribed</span></span>
<span class="src t" style="left:798.30px;letter-spacing:-0.318px;">API - Dash Api</span>
<span class="stars"><svg class="st" viewBox="0 0 20 20"><path fill="#fbbb36" d="M10.00 0.60L12.44 7.54L19.80 7.72L13.95 12.18L16.05 19.23L10.00 15.05L3.95 19.23L6.05 12.18L0.20 7.72L7.56 7.54Z"/></svg><svg class="st" viewBox="0 0 20 20"><path fill="#fbbb36" d="M10.00 0.60L12.44 7.54L19.80 7.72L13.95 12.18L16.05 19.23L10.00 15.05L3.95 19.23L6.05 12.18L0.20 7.72L7.56 7.54Z"/></svg><svg class="st" viewBox="0 0 20 20"><path fill="#e2e1e0" d="M10.00 0.60L12.44 7.54L19.80 7.72L13.95 12.18L16.05 19.23L10.00 15.05L3.95 19.23L6.05 12.18L0.20 7.72L7.56 7.54Z"/></svg><svg class="st" viewBox="0 0 20 20"><path fill="#e2e1e0" d="M10.00 0.60L12.44 7.54L19.80 7.72L13.95 12.18L16.05 19.23L10.00 15.05L3.95 19.23L6.05 12.18L0.20 7.72L7.56 7.54Z"/></svg><svg class="st" viewBox="0 0 20 20"><path fill="#e2e1e0" d="M10.00 0.60L12.44 7.54L19.80 7.72L13.95 12.18L16.05 19.23L10.00 15.05L3.95 19.23L6.05 12.18L0.20 7.72L7.56 7.54Z"/></svg></span>
<span class="da t" style="left:1055.30px;letter-spacing:-0.190px;">8/23/23 8:17AM</span>
<span class="lc t" style="left:1190.50px;letter-spacing:0.211px;">8/23/23</span>
</div><div class="row" style="top:1035px">
<span class="cb"></span><span class="vl" style="left:47px;top:0;height:48px"></span><span class="vl" style="left:287px;top:0;height:48px"></span>
<span class="em t sb" style="left:66.30px;letter-spacing:0.435px;">tobef92939@chodyi.com</span>
<svg class="rc" viewBox="0 0 8 12"><path d="M1.5 1.5L6 6l-4.5 4.5" fill="none" stroke="#a3a19f" stroke-width="1.700"/></svg>
<span class="fn t" style="left:306.30px;letter-spacing:0.356px;">tobef</span>
<span class="sub"><span style="left:9.30px;letter-spacing:-0.078px;">Subscribed</span></span>
<span class="src t" style="left:798.30px;letter-spacing:-0.318px;">API - Dash Api</span>
<span class="stars"><svg class="st" viewBox="0 0 20 20"><path fill="#fbbb36" d="M10.00 0.60L12.44 7.54L19.80 7.72L13.95 12.18L16.05 19.23L10.00 15.05L3.95 19.23L6.05 12.18L0.20 7.72L7.56 7.54Z"/></svg><svg class="st" viewBox="0 0 20 20"><path fill="#fbbb36" d="M10.00 0.60L12.44 7.54L19.80 7.72L13.95 12.18L16.05 19.23L10.00 15.05L3.95 19.23L6.05 12.18L0.20 7.72L7.56 7.54Z"/></svg><svg class="st" viewBox="0 0 20 20"><path fill="#e2e1e0" d="M10.00 0.60L12.44 7.54L19.80 7.72L13.95 12.18L16.05 19.23L10.00 15.05L3.95 19.23L6.05 12.18L0.20 7.72L7.56 7.54Z"/></svg><svg class="st" viewBox="0 0 20 20"><path fill="#e2e1e0" d="M10.00 0.60L12.44 7.54L19.80 7.72L13.95 12.18L16.05 19.23L10.00 15.05L3.95 19.23L6.05 12.18L0.20 7.72L7.56 7.54Z"/></svg><svg class="st" viewBox="0 0 20 20"><path fill="#e2e1e0" d="M10.00 0.60L12.44 7.54L19.80 7.72L13.95 12.18L16.05 19.23L10.00 15.05L3.95 19.23L6.05 12.18L0.20 7.72L7.56 7.54Z"/></svg></span>
<span class="da t" style="left:1055.30px;letter-spacing:-0.044px;">8/23/23 7:58AM</span>
<span class="lc t" style="left:1190.50px;letter-spacing:0.211px;">8/23/23</span>
</div>
</div>
<div id="tshadow"></div>
<div id="feedback"><span>Feedback</span></div>
<div id="help">?</div>
</body></html>
